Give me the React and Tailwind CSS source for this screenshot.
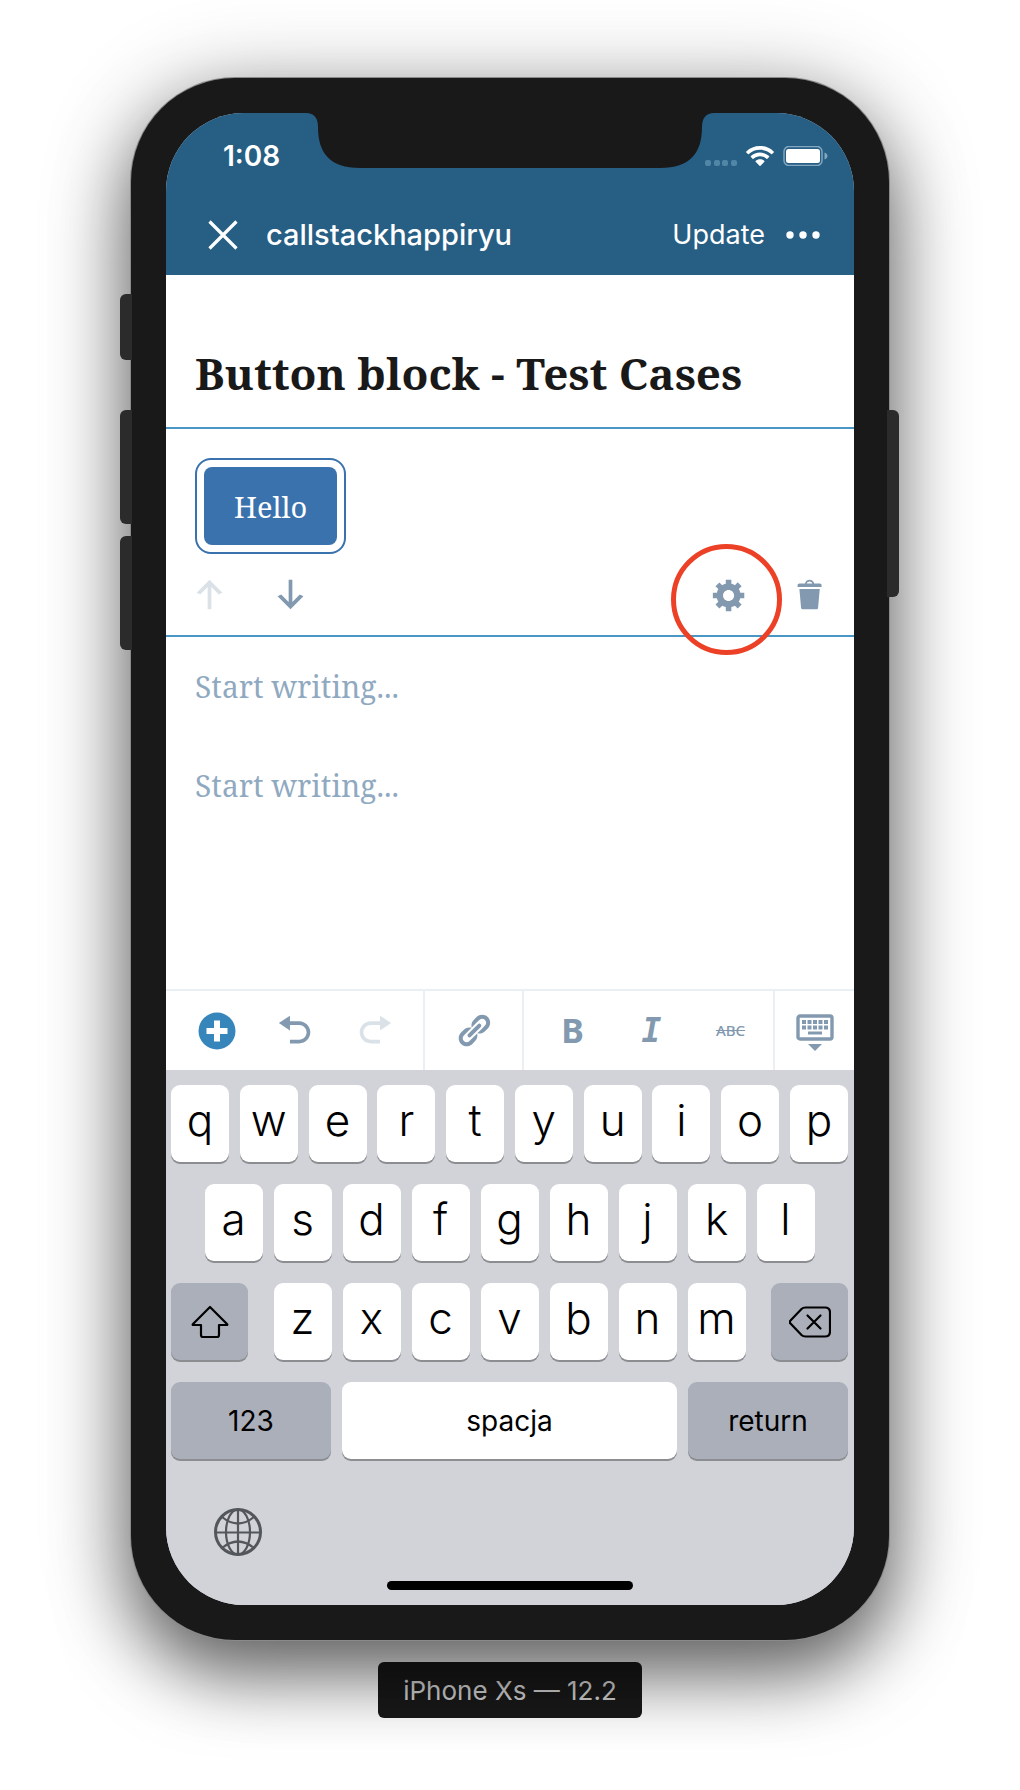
const SANS = "font-[Inter,'Liberation_Sans',sans-serif]";
const SERIF = "font-['Noto_Serif','Droid_Serif','DejaVu_Serif',serif]";

function Glyph({ d, className = "" }) {
  return (
    <svg viewBox="0 0 20 20" fill="currentColor" aria-hidden="true" className={`size-[37px] ${className}`}>
      <path d={d} />
    </svg>
  );
}

const ICONS = {
  up: "M11 18H9V6l-4 4-2-1 7-7 7 7-2 1-4-4v12z",
  down: "M9 2h2v12l4-4 2 1-7 7-7-7 2-1 4 4V2z",
  gear: "M18 12h-2.18c-.17.7-.44 1.35-.81 1.93l1.54 1.54-2.1 2.1-1.54-1.54c-.58.36-1.23.63-1.91.79V19H8v-2.18c-.68-.16-1.33-.43-1.91-.79l-1.54 1.54-2.12-2.12 1.54-1.54c-.36-.58-.63-1.23-.79-1.91H1V9.03h2.17c.16-.7.44-1.35.8-1.94L2.43 5.55l2.1-2.1 1.54 1.54c.58-.37 1.24-.64 1.93-.81V2h3v2.18c.68.16 1.33.43 1.91.79l1.54-1.54 2.12 2.12-1.54 1.54c.36.59.64 1.24.8 1.94H18V12zm-8.5 1.5c1.66 0 3-1.34 3-3s-1.34-3-3-3-3 1.34-3 3 1.34 3 3 3z",
  trash: "M12 4h3c.6 0 1 .4 1 1v1H3V5c0-.6.5-1 1-1h3c.2-1.1 1.3-2 2.5-2s2.3.9 2.5 2zM8 4h3c-.2-.6-.9-1-1.5-1S8.2 3.4 8 4zM4 7h11l-.9 10.1c0 .5-.5.9-1 .9H5.9c-.5 0-.9-.4-1-.9L4 7z",
  undo: "M12 5H7V2L1 6l6 4V7h5c2.2 0 4 1.8 4 4s-1.8 4-4 4H7v2h5c3.3 0 6-2.7 6-6s-2.7-6-6-6z",
  redo: "M8 5h5V2l6 4-6 4V7H8c-2.2 0-4 1.8-4 4s1.8 4 4 4h5v2H8c-3.3 0-6-2.7-6-6s2.7-6 6-6z",
  link: "M17.74 2.76c1.68 1.69 1.68 4.41 0 6.1l-1.53 1.52c-1.12 1.12-2.7 1.47-4.14 1.09l2.62-2.61.76-.77.76-.76c.84-.84.84-2.2 0-3.04-.84-.85-2.2-.85-3.04 0l-.77.76-3.38 3.38c-.37-1.44-.02-3.02 1.1-4.14l1.52-1.53c1.69-1.68 4.42-1.68 6.1 0zM8.59 13.43l5.34-5.34c.42-.42.42-1.1 0-1.52-.44-.43-1.13-.39-1.53 0l-5.33 5.34c-.42.42-.42 1.1 0 1.52.44.43 1.13.39 1.52 0zm-.76 2.29l4.14-4.15c.38 1.44.03 3.02-1.09 4.14l-1.52 1.53c-1.69 1.68-4.41 1.68-6.1 0-1.68-1.68-1.68-4.42 0-6.1l1.53-1.52c1.12-1.12 2.7-1.47 4.14-1.1l-4.14 4.15c-.85.84-.85 2.2 0 3.05.84.84 2.2.84 3.04 0z",
};

function SideButton({ className }) {
  return <div className={`absolute w-3 bg-[#2b2b2b] ${className}`} />;
}

function Notch() {
  return (
    <svg viewBox="0 0 408 55" aria-hidden="true" className="absolute top-0 left-1/2 h-[55px] w-[408px] -translate-x-1/2">
      <path
        fill="#191919"
        d="M0 0C8 0 12 5 12 14C12 40 24 55 54 55H354C384 55 396 40 396 14C396 5 400 0 408 0Z"
      />
    </svg>
  );
}

function StatusBar() {
  return (
    <div className="flex h-[85px] items-center justify-between pr-[26px] pl-[57px]">
      <span className="text-[28px] font-semibold">1:08</span>
      <div className="flex items-center gap-[9px]">
        <svg viewBox="0 0 32 20" className="h-5 w-8" fill="#5187a6" aria-label="No signal">
          <rect x="0" y="14" width="6" height="6" rx="2" />
          <rect x="9" y="14" width="6" height="6" rx="2" />
          <rect x="17" y="14" width="6" height="6" rx="2" />
          <rect x="26" y="14" width="6" height="6" rx="2" />
        </svg>
        <svg viewBox="0 0 28 20" className="h-5 w-7" fill="white" aria-label="Wi-Fi">
          <path d="M14 0C8.700 0 3.900 2 .3 5.400c-.3.300-.3.700 0 1l1.600 1.600c.3.300.7.300 1 0C5.900 5.300 9.700 3.800 14 3.800s8.100 1.500 11.100 4.200c.3.300.7.300 1 0l1.600-1.600c.3-.3.300-.7 0-1C24.100 2 19.300 0 14 0z" />
          <path d="M14 6.600c-3.500 0-6.700 1.300-9.100 3.500-.3.300-.3.700 0 1l1.700 1.600c.3.300.6.300.9 0 1.700-1.500 4-2.400 6.500-2.400s4.800.9 6.500 2.400c.3.300.6.300.9 0l1.700-1.600c.3-.3.300-.7 0-1-2.400-2.200-5.600-3.500-9.100-3.500z" />
          <path d="M14 13.300c-1.700 0-3.200.6-4.400 1.600-.3.300-.3.600 0 .9l3.900 3.900c.3.300.7.300 1 0l3.900-3.900c.3-.3.300-.6 0-.9-1.200-1-2.700-1.600-4.400-1.600z" />
        </svg>
        <svg viewBox="0 0 45 20" className="h-5 w-[45px]" aria-label="Battery full">
          <rect x="1" y="0.500" width="38" height="19" rx="5" fill="none" stroke="#82a6bd" strokeWidth="1.500" />
          <rect x="3" y="3" width="34" height="14" rx="2.500" fill="white" />
          <path d="M41.500 6.500C44 7.500 44.500 9 44.500 10S44 12.500 41.500 13.500Z" fill="#82a6bd" />
        </svg>
      </div>
    </div>
  );
}

function NavBar() {
  return (
    <div className="flex h-[77px] items-center pr-[34px] pb-[3px] pl-[42px]">
      <button type="button" aria-label="Close">
        <svg viewBox="0 0 30 30" className="size-[30px]" stroke="white" strokeWidth="3.200">
          <path d="M1.500 1.500L28.500 28.500M28.500 1.500L1.500 28.500" />
        </svg>
      </button>
      <h2 className="ml-7 flex-1 text-[29px] font-medium">callstackhappiryu</h2>
      <button type="button" className="text-[27px]">Update</button>
      <button type="button" aria-label="More options" className="ml-[21px]">
        <svg viewBox="0 0 34 8" className="h-2 w-[34px]" fill="white">
          <circle cx="4" cy="4" r="3.700" />
          <circle cx="17" cy="4" r="3.700" />
          <circle cx="30" cy="4" r="3.700" />
        </svg>
      </button>
    </div>
  );
}

function ButtonBlock() {
  return (
    <section aria-label="Button block" className="border-y-2 border-[#4a96c4] px-[29px] pt-[29px]">
      <div className="inline-flex rounded-2xl border-2 border-[#3a72ad] p-[7px]">
        <button type="button" className={`rounded-lg bg-[#3a72ad] px-[30px] pt-[22px] pb-5 text-[29px] leading-9 text-white ${SERIF}`}>
          Hello
        </button>
      </div>
      <div className="flex h-[81px] items-center justify-between text-[#8299b0]">
        <div className="flex gap-11 -ml-1">
          <button type="button" disabled aria-label="Move block up" className="text-[#dae2e8]">
            <Glyph d={ICONS.up} />
          </button>
          <button type="button" aria-label="Move block down">
            <Glyph d={ICONS.down} />
          </button>
        </div>
        <div className="-mr-1 flex gap-11">
          <button type="button" aria-label="Block settings" className="relative">
            <Glyph d={ICONS.gear} />
            <span className="pointer-events-none absolute -top-8 -left-10 size-[111px] rounded-full border-[5px] border-[#ec4126]" />
          </button>
          <button type="button" aria-label="Delete block">
            <Glyph d={ICONS.trash} />
          </button>
        </div>
      </div>
    </section>
  );
}

function Tool({ label, disabled, children, className = "" }) {
  return (
    <button
      type="button"
      aria-label={label}
      disabled={disabled}
      className={`flex w-[79px] items-center justify-center ${className}`}
    >
      {children}
    </button>
  );
}

function Toolbar() {
  return (
    <div className="flex h-[81px] divide-x-2 divide-[#e9eff3] border-t-2 border-[#e9eff3] bg-white text-[#8299b0]">
      <div className="flex pr-[9px] pl-[11px]">
        <Tool label="Add block">
          <svg viewBox="0 0 38 38" className="size-[38px]">
            <circle cx="19" cy="19" r="18.500" fill="#3786bb" />
            <path d="M19 8.500V29.500M8.500 19H29.500" stroke="white" strokeWidth="6" />
          </svg>
        </Tool>
        <Tool label="Undo">
          <Glyph d={ICONS.undo} />
        </Tool>
        <Tool label="Redo" disabled className="text-[#dae2e8]">
          <Glyph d={ICONS.redo} />
        </Tool>
      </div>
      <div className="flex px-[9px]">
        <Tool label="Link">
          <Glyph d={ICONS.link} />
        </Tool>
      </div>
      <div className="flex flex-1 pl-[9px]">
        <Tool label="Bold" className="font-['Noto_Sans',sans-serif] text-[34px] font-bold">B</Tool>
        <Tool label="Italic" className="font-['DejaVu_Sans_Mono',monospace] text-[33px] font-bold italic">I</Tool>
        <Tool label="Strikethrough" className="font-['Noto_Sans',sans-serif] text-[15px] font-medium line-through">ABC</Tool>
      </div>
      <Tool label="Hide keyboard">
        <svg viewBox="0 0 38 38" className="mt-1 size-[38px]" fill="currentColor">
          <rect x="2" y="2" width="34" height="23" rx="2" fill="none" stroke="currentColor" strokeWidth="3.400" />
          {[6, 11.500, 17, 22.500, 28].map((x) => (
            <g key={x}>
              <rect x={x} y="6" width="4" height="4" />
              <rect x={x} y="11.500" width="4" height="4" />
            </g>
          ))}
          <rect x="12" y="17.500" width="14" height="3" />
          <path d="M12 30H26L19 37Z" />
        </svg>
      </Tool>
    </div>
  );
}

const KEY = "flex h-[77px] items-center justify-center rounded-[9px] text-black shadow-[0_2px_0_#8b8d91]";

function LetterKey({ children }) {
  return (
    <button type="button" className={`${KEY} w-[58px] bg-white pb-2 text-[44px] font-[350]`}>
      {children}
    </button>
  );
}

function Keyboard() {
  return (
    <div className="bg-[#d1d3d9] pt-[15px] pr-1.5 pb-[15px] pl-[5px]">
      <div className="flex flex-col gap-[22px]">
        <div className="flex justify-between">
          {[..."qwertyuiop"].map((k) => <LetterKey key={k}>{k}</LetterKey>)}
        </div>
        <div className="flex justify-center gap-[11px]">
          {[..."asdfghjkl"].map((k) => <LetterKey key={k}>{k}</LetterKey>)}
        </div>
        <div className="flex justify-between">
          <button type="button" aria-label="Shift" className={`${KEY} w-[77px] bg-[#abafba]`}>
            <svg viewBox="0 0 38 34" className="h-[34px] w-[38px]" fill="none" stroke="black" strokeWidth="2.200" strokeLinejoin="round">
              <path d="M19 2L36 19Q37 20 35.500 20H28V30Q28 32 26 32H12Q10 32 10 30V20H2.500Q1 20 2 19Z" />
            </svg>
          </button>
          <div className="flex gap-[11px]">
            {[..."zxcvbnm"].map((k) => <LetterKey key={k}>{k}</LetterKey>)}
          </div>
          <button type="button" aria-label="Delete" className={`${KEY} w-[77px] bg-[#abafba]`}>
            <svg viewBox="0 0 42 32" className="h-8 w-[42px]" fill="none" stroke="black" strokeWidth="2.200" strokeLinejoin="round" strokeLinecap="round">
              <path d="M16.500 1.500H36Q41 1.500 41 6.500V25.500Q41 30.500 36 30.500H16.500Q14 30.500 12.500 29L1.500 17.500Q0 16 1.500 14.500L12.500 3Q14 1.500 16.500 1.500Z" />
              <path d="M18.500 9.500L31.500 22.500M31.500 9.500L18.500 22.500" />
            </svg>
          </button>
        </div>
        <div className="flex gap-[11px] text-[28px]">
          <button type="button" className={`${KEY} w-40 bg-[#abafba]`}>123</button>
          <button type="button" className={`${KEY} flex-1 bg-white`}>spacja</button>
          <button type="button" className={`${KEY} w-40 bg-[#abafba]`}>return</button>
        </div>
      </div>
      <button type="button" aria-label="Switch keyboard language" className="mt-12 ml-[42px] block">
        <svg viewBox="0 0 50 50" className="size-[50px]" fill="none" stroke="#53565b" strokeWidth="2.200">
          <circle cx="25" cy="25" r="22.500" strokeWidth="3" />
          <path d="M25 2V48M2 25.500H48" />
          <ellipse cx="25" cy="25" rx="12" ry="22.500" />
          <path d="M9 10Q25 23 41 10M9 41Q25 28 41 41" />
        </svg>
      </button>
      <div className="mx-auto mt-6 h-[9px] w-[246px] rounded-full bg-black" />
    </div>
  );
}

export default function App() {
  return (
    <main className={`flex min-h-screen flex-col items-center overflow-hidden bg-white px-[131px] pt-[78px] pb-[72px] ${SANS}`}>
      <div className="relative w-full rounded-[104px] bg-[#191919] p-[35px] shadow-[0_0_0_1px_#8a8a8a,0_36px_70px_rgba(0,0,0,0.5),0_10px_90px_rgba(0,0,0,0.300)]">
        <SideButton className="top-[216px] -left-[11px] h-[66px] rounded-l-md" />
        <SideButton className="top-[332px] -left-[11px] h-[114px] rounded-l-md" />
        <SideButton className="top-[458px] -left-[11px] h-[114px] rounded-l-md" />
        <SideButton className="top-[332px] -right-[10px] h-[187px] rounded-r-md" />

        <div className="relative flex flex-col overflow-hidden rounded-[78px] bg-[#d1d3d9]">
          <header className="bg-[#265e84] text-white">
            <StatusBar />
            <NavBar />
          </header>
          <Notch />
          <div className="flex min-h-[714px] flex-col bg-white">
            <h1 className={`px-[29px] pt-[74px] pb-[30px] text-[44px] leading-[48px] font-bold whitespace-nowrap text-[#191919] ${SERIF}`}>
              Button block - Test Cases
            </h1>
            <ButtonBlock />
            {["First paragraph", "Second paragraph"].map((label) => (
              <input
                key={label}
                aria-label={label}
                placeholder="Start writing..."
                className={`h-[99px] w-full px-[29px] text-[30px] placeholder:text-[#8fa9c1] ${SERIF}`}
              />
            ))}
          </div>
          <Toolbar />
          <Keyboard />
        </div>
      </div>
      <p className="mt-[22px] flex h-14 items-center rounded-md bg-[#191919] px-[25px] text-[26px] text-[#d5d5d5]">iPhone Xs — 12.2</p>
    </main>
  );
}
